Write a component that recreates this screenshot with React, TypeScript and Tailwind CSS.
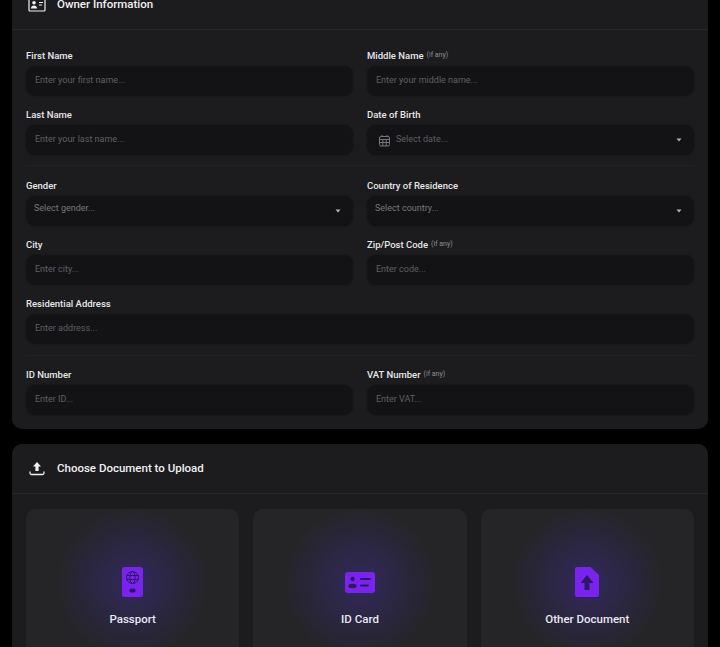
import { ReactNode } from 'react';

const fieldBox = 'h-[30px] w-full rounded-[9px] bg-[#131315] flex items-center text-[9px] text-[#5f5f63] shadow-[0_0_2px_#151517]';

function Label({ text, hint }: { text: string; hint?: string }) {
  return (
    <div className="h-[11px] mb-[5px] flex items-center text-[9.5px] font-medium leading-none text-[#e6e6e8]">
      {text}
      {hint && <span className="ml-[3px] text-[7px] font-normal text-[#8d8d92]">{hint}</span>}
    </div>
  );
}

function TextField({ label, hint, placeholder }: { label: string; hint?: string; placeholder: string }) {
  return (
    <div>
      <Label text={label} hint={hint} />
      <div className={`${fieldBox} pl-[9px]`}>{placeholder}</div>
    </div>
  );
}

function Caret() {
  return (
    <svg width="6" height="4" viewBox="0 0 6 4" className="absolute right-[12px] top-[13px]">
      <path d="M0.5 0.5h5L3 3.5z" fill="#b5b5b8" />
    </svg>
  );
}

function SelectField({ label, placeholder }: { label: string; placeholder: string }) {
  return (
    <div>
      <Label text={label} />
      <div className={`${fieldBox} relative pl-[8px] items-start pt-[6px] text-[9.5px] text-[#77777b]`}>
        {placeholder}
        <Caret />
      </div>
    </div>
  );
}

function DateField() {
  return (
    <div>
      <Label text="Date of Birth" />
      <div className={`${fieldBox} relative pl-[11px]`}>
        <svg width="13" height="13" viewBox="0 0 13 13" fill="none" stroke="#77777b" strokeWidth="1" className="mr-[5px]">
          <rect x="1.5" y="2.5" width="10" height="9.5" rx="1.5" />
          <path d="M1.5 5.5h10M1.5 8.5h10M4.8 5.5v6.5M8.2 5.5v6.5M4 1v2M9 1v2" />
        </svg>
        Select date...
        <Caret />
      </div>
    </div>
  );
}

function Divider() {
  return <div className="h-px bg-[#222224]" />;
}

function Card({ icon, title, children }: { icon: ReactNode; title: string; children: ReactNode }) {
  return (
    <section className="rounded-[10px] bg-[#1c1c1e]">
      <header className="h-[50px] flex items-center pl-[16px] border-b border-[#28282a]">
        <span className="w-[18px] h-[18px] flex items-center justify-center mr-[11px]">{icon}</span>
        <h2 className="text-[11.5px] font-medium text-[#f0f0f2]">{title}</h2>
      </header>
      {children}
    </section>
  );
}

function DocCard({ icon, label }: { icon: ReactNode; label: string }) {
  return (
    <div className="h-[170px] rounded-[10px] bg-[#252527] bg-[radial-gradient(circle_at_50%_74px,#30285a_0px,#2d2748_30px,#29263a_50px,#252527_76px)] flex flex-col items-center pt-[58px]">
      <div className="h-[30px] flex items-center justify-center">{icon}</div>
      <div className="mt-[14px] text-[11.5px] font-medium text-[#e8e8f0]">{label}</div>
    </div>
  );
}

export default function App() {
  return (
    <div className="h-[647px] overflow-hidden bg-black font-['Roboto',sans-serif]">
      <div className="-mt-[20px] px-[12px] flex flex-col gap-[15px]">
        <Card
          title="Owner Information"
          icon={
            <svg width="18" height="15" viewBox="0 0 18 15" fill="none">
              <rect x="1" y="1" width="16" height="13" rx="1" stroke="#f0f0f2" strokeWidth="1.2" />
              <circle cx="6" cy="5.8" r="1.8" fill="#f0f0f2" />
              <path d="M2.8 11.5c.3-2 1.6-3 3.2-3s2.9 1 3.2 3z" fill="#f0f0f2" />
              <path d="M11 5.5h4M11 8h3" stroke="#f0f0f2" strokeWidth="1" />
            </svg>
          }
        >
          <div className="px-[14px] pt-[20px] pb-[14px]">
            <div className="grid grid-cols-2 gap-x-[14px] gap-y-[13px]">
              <TextField label="First Name" placeholder="Enter your first name..." />
              <TextField label="Middle Name" hint="(if any)" placeholder="Enter your middle name..." />
              <TextField label="Last Name" placeholder="Enter your last name..." />
              <DateField />
            </div>
            <div className="mt-[10px] mb-[14px]"><Divider /></div>
            <div className="grid grid-cols-2 gap-x-[14px] gap-y-[13px]">
              <SelectField label="Gender" placeholder="Select gender..." />
              <SelectField label="Country of Residence" placeholder="Select country..." />
              <TextField label="City" placeholder="Enter city..." />
              <TextField label="Zip/Post Code" hint="(if any)" placeholder="Enter code..." />
              <div className="col-span-2">
                <TextField label="Residential Address" placeholder="Enter address..." />
              </div>
            </div>
            <div className="mt-[11px] mb-[13px]"><Divider /></div>
            <div className="grid grid-cols-2 gap-x-[14px]">
              <TextField label="ID Number" placeholder="Enter ID..." />
              <TextField label="VAT Number" hint="(if any)" placeholder="Enter VAT..." />
            </div>
          </div>
        </Card>
        <Card
          title="Choose Document to Upload"
          icon={
            <svg width="16" height="15" viewBox="0 0 16 15" fill="none">
              <path d="M8 1l4 4.4H9.6V10H6.4V5.4H4z" fill="#f0f0f2" />
              <path d="M1 10.5v1.5a1.5 1.5 0 0 0 1.5 1.5h11a1.5 1.5 0 0 0 1.5-1.5v-1.5" stroke="#f0f0f2" strokeWidth="1.3" />
            </svg>
          }
        >
          <div className="px-[14px] pt-[15px] grid grid-cols-3 gap-x-[14px]">
            <DocCard
              label="Passport"
              icon={
                <svg width="21" height="30" viewBox="0 0 21 30">
                  <rect width="21" height="30" rx="2.5" fill="#7a22f0" />
                  <circle cx="10.5" cy="10.5" r="6" fill="none" stroke="#2d1a5c" strokeWidth="1" />
                  <ellipse cx="10.5" cy="10.5" rx="2.6" ry="6" fill="none" stroke="#2d1a5c" strokeWidth="1" />
                  <path d="M4.5 8.5h12M4.5 12.5h12" stroke="#2d1a5c" strokeWidth="1" />
                  <rect x="7.5" y="21.5" width="6" height="4" rx="1.5" fill="#2d1a5c" />
                </svg>
              }
            />
            <DocCard
              label="ID Card"
              icon={
                <svg width="30" height="21" viewBox="0 0 30 21">
                  <rect width="30" height="21" rx="3" fill="#7a22f0" />
                  <circle cx="7.5" cy="7" r="2.2" fill="#2d1a5c" />
                  <ellipse cx="7.5" cy="14" rx="4.2" ry="2.2" fill="#2d1a5c" />
                  <path d="M16 7h9M16 13.5h7" stroke="#2d1a5c" strokeWidth="2" strokeLinecap="round" />
                </svg>
              }
            />
            <DocCard
              label="Other Document"
              icon={
                <svg width="24" height="30" viewBox="0 0 24 30">
                  <path d="M2 0h13.5L24 8v20a2 2 0 0 1-2 2H2a2 2 0 0 1-2-2V2a2 2 0 0 1 2-2z" fill="#7a22f0" />
                  <path d="M12 8l6.5 8H14.5v7h-5v-7H5.500z" fill="#2d1a5c" />
                </svg>
              }
            />
          </div>
        </Card>
      </div>
    </div>
  );
}
